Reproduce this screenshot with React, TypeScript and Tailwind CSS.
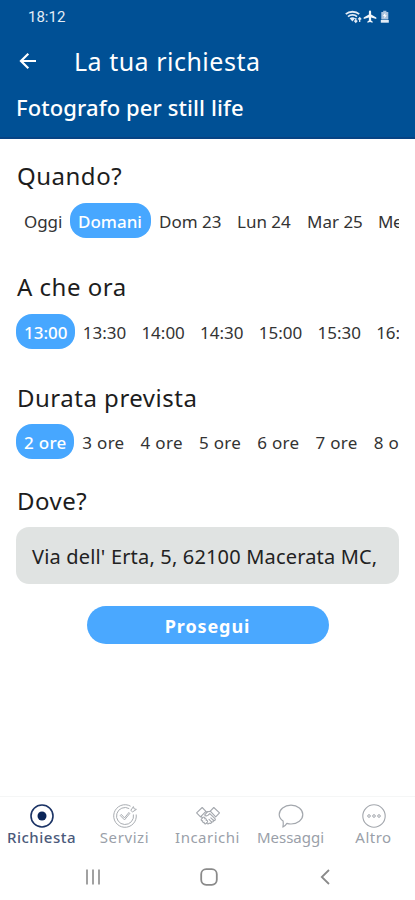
import { useState } from "react";
import type { ReactNode } from "react";
import { clsx } from "clsx";

// ── Data ──────────────────────────────────────────────────────────────────────

type Option = { label: string; width: string; tracking: string };

const DAYS: Option[] = [
  { label: "Oggi", width: "w-[54px]", tracking: "tracking-[-0.1px]" },
  { label: "Domani", width: "w-[81px]", tracking: "tracking-normal" },
  { label: "Dom 23", width: "w-[78px]", tracking: "tracking-normal" },
  { label: "Lun 24", width: "w-[70px]", tracking: "tracking-normal" },
  { label: "Mar 25", width: "w-[71px]", tracking: "tracking-normal" },
  { label: "Me", width: "w-[73px]", tracking: "tracking-[-0.5px]" },
];

const HOURS: Option[] = ["13:00", "13:30", "14:00", "14:30", "15:00", "15:30", "16:"].map(
  (label) => ({ label, width: "w-[58.7px]", tracking: "tracking-normal" }),
);

const DURATIONS: Option[] = ["2 ore", "3 ore", "4 ore", "5 ore", "6 ore", "7 ore", "8 o"].map(
  (label) => ({ label, width: "w-[58.3px]", tracking: "tracking-[0.3px]" }),
);

// ── Status bar icons ──────────────────────────────────────────────────────────

function StatusIcons() {
  return (
    <svg width="46" height="14" viewBox="0 0 46 14" fill="none" stroke="#e3ecf6">
      <path d="M.8 4.200C4.300.9 10.700.9 14.200 4.200M3 6.600C5.500 4.300 9.500 4.300 12 6.600" strokeWidth="1.800" />
      <path d="M4.600 8.300C6.200 6.900 8.700 6.900 10.200 8.300L7.400 11.400Z" fill="#e3ecf6" stroke="none" />
      <path d="M10.800 8v4M9.300 10.600l1.500 1.600 1.500-1.600M14.700 12V8M13.200 9.400l1.500-1.600 1.500 1.600" strokeWidth="1.300" />
      <path
        d="M31.300 8.900V7.500L26.100 4.500V1.700a1.100 1.100 0 0 0-2.200 0V4.500L18.700 7.500V8.900L23.900 7.400V10.400L22.400 11.600V12.700L25 12 27.600 12.700V11.600L26.100 10.400V7.400Z"
        fill="#f0f5fa"
        stroke="none"
      />
      <path d="M38.200.8h3.200V2h1.900v7.600h-7V2h1.900Z" fill="#a9c3df" stroke="none" />
      <path d="M40.300 2.700 37.900 6h1.500v2.600L41.700 5.300h-1.400Z" fill="#fff" stroke="none" />
      <path d="M35.800 10h8v2.700h-8Z" fill="#e3ecf6" stroke="none" />
    </svg>
  );
}

// ── Tab icons ─────────────────────────────────────────────────────────────────

function RequestIcon() {
  return (
    <svg width="26" height="26" viewBox="0 0 26 26" fill="none">
      <circle cx="13" cy="13" r="11" stroke="#1b3365" strokeWidth="1.600" />
      <circle cx="13" cy="13" r="4.500" fill="#0b2558" />
    </svg>
  );
}

function ServicesIcon() {
  return (
    <svg width="26" height="26" viewBox="0 0 26 26" fill="none" stroke="#a9adb2" strokeWidth="1">
      <path d="M18.600 3.200A11.300 11.300 0 1 0 24.200 11.500" />
      <path d="M17.200 5.600A8.500 8.500 0 1 0 21.400 11.500" />
      <path d="m9.300 11.400 3.200 3.500 4.700-5.800M9.300 11.400l-1 1.200 4.200 4.300 5.600-6.800" />
      <path d="m18.800 7.400 2.600-3.800.7 2.200 2.300.6-3.800 2.500Z" />
    </svg>
  );
}

function HandshakeIcon() {
  return (
    <svg width="26" height="26" viewBox="0 0 26 26" fill="none" stroke="#a3a7ad" strokeWidth="1.100" strokeLinejoin="round" strokeLinecap="round">
      <path d="m7.200 4.500 3.700 3.800-5.400 5.500-3.900-3.900Z" />
      <path d="m18.800 4.500-3.500 3.700 5.400 5.600 3.800-3.900Z" />
      <path d="M10.500 8.700h2.200l-3 3.200c.8 1.400 2.600 1.200 3.600.1l1.500-1.300 5.200 5c1 1.200-.5 2.500-1.700 1.500" />
      <path d="m12.500 8.700 3-.3M6 13.300l1.200 1.200M18.300 17.200l-2.500-2.400M16.500 18.800l-2.500-2.400M18.300 17.200c.6 1.200-.7 2.300-1.800 1.600.3 1.300-1.200 2-2.200 1.300-.5 1-1.700 1-2.600.2" />
      <path d="m6.400 16.200 1.700-1.800c1.200-.9 2.400.3 1.600 1.400 1.200-.6 2.200.6 1.400 1.600 1.100-.4 2 .7 1.300 1.700l-1.700 1.600c-1 .5-1.900-.4-1.500-1.400-1.100.5-2-.5-1.500-1.500-1.100.4-2-.7-1.300-1.600Z" />
    </svg>
  );
}

function BubbleIcon() {
  return (
    <svg width="26" height="26" viewBox="0 0 26 26" fill="none" stroke="#a3a7ad" strokeWidth="1.200" strokeLinejoin="round">
      <path d="M13 2.200c6.600 0 11.800 4.200 11.800 9.400S19.600 21 13 21c-1.500 0-2.800-.2-4.100-.6-1.100 1.700-2.500 2.800-4 3.700.5-1.900.5-3.900.2-6C2.600 16.400 1.200 14.200 1.200 11.600 1.200 6.400 6.400 2.200 13 2.200Z" />
    </svg>
  );
}

function MoreIcon() {
  return (
    <svg width="26" height="26" viewBox="0 0 26 26" fill="none" stroke="#a3a7ad">
      <circle cx="13" cy="13" r="11.200" strokeWidth="1.100" />
      <circle cx="8" cy="13" r="1.300" />
      <circle cx="13" cy="13" r="1.300" />
      <circle cx="18" cy="13" r="1.300" />
    </svg>
  );
}

// ── Building blocks ───────────────────────────────────────────────────────────

function OptionRow({ options, initial }: { options: Option[]; initial: string }) {
  const [selected, setSelected] = useState(initial);
  return (
    <div className="flex h-[35px] overflow-hidden">
      {options.map((o) => (
        <button
          key={o.label}
          onClick={() => setSelected(o.label)}
          className={clsx(
            "h-[35px] shrink-0 whitespace-nowrap rounded-[16px] pt-0.5 pl-2 text-left text-[17px]",
            o.width,
            o.tracking,
            o.label === selected ? "bg-[#47a7ff] font-medium text-white" : "text-[#333]",
          )}
        >
          {o.label}
        </button>
      ))}
    </div>
  );
}

function SectionTitle({ children, className }: { children: ReactNode; className?: string }) {
  return (
    <h2 className={clsx("h-8 whitespace-nowrap pl-px text-[24px] leading-[34px] tracking-[0.5px] text-[#1d1d1d]", className)}>
      {children}
    </h2>
  );
}

function Tab({ icon, label, active, className }: { icon: ReactNode; label: string; active?: boolean; className: string }) {
  return (
    <button className={clsx("flex w-[83px] flex-col items-center", active ? "font-medium text-[#4b5a7b]" : "text-[#9a9fa9]")}>
      {icon}
      <span className={clsx("mt-[-3px] whitespace-nowrap text-[15px] leading-[22px]", className)}>{label}</span>
    </button>
  );
}

// ── App ───────────────────────────────────────────────────────────────────────

export default function App() {
  return (
    <div className="flex h-[900px] w-[415px] flex-col overflow-hidden bg-white font-['Noto_Sans',sans-serif]">
      <header className="h-[139px] shrink-0 border-b-2 border-[#074384] bg-[#005095] text-white">
        <div className="flex h-[34px] items-center justify-between pl-7 pr-[24px]">
          <span className="pt-px font-[Roboto,sans-serif] text-[15px] text-[#e3ecf6]">18:12</span>
          <StatusIcons />
        </div>
        <div className="flex h-[54px] items-center pl-[19px]">
          <svg width="18" height="18" viewBox="0 0 18 18" fill="none" stroke="#fff" strokeWidth="2.200">
            <path d="M17 9H2.500M9.300 1.800 2 9l7.300 7.200" />
          </svg>
          <h1 className="ml-[37px] whitespace-nowrap pt-0.5 text-[25px] tracking-[0.5px]">La tua richiesta</h1>
        </div>
        <p className="pl-4 text-[22px] font-medium leading-[38px] tracking-[0.1px]">Fotografo per still life</p>
      </header>

      <main className="flex grow flex-col px-4">
        <SectionTitle className="mt-5 mb-3">Quando?</SectionTitle>
        <OptionRow options={DAYS} initial="Domani" />

        <SectionTitle className="mt-8 mb-3">A che ora</SectionTitle>
        <OptionRow options={HOURS} initial="13:00" />

        <SectionTitle className="mt-8 mb-[11px]">Durata prevista</SectionTitle>
        <OptionRow options={DURATIONS} initial="2 ore" />

        <SectionTitle className="mt-[25px]">Dove?</SectionTitle>
        <div className="mt-[11px] flex h-[57px] items-center overflow-hidden whitespace-nowrap rounded-[13px] bg-[#e0e3e2] px-4 pt-0.5 text-[20px] tracking-[0.17px] text-[#222]">
          Via dell' Erta, 5, 62100 Macerata MC,
        </div>

        <button className="mx-auto mt-[22px] h-[38px] w-[242px] rounded-full bg-[#4aa8ff] pt-0.5 text-[18px] font-bold tracking-[0.9px] text-white">
          Prosegui
        </button>
      </main>

      <nav className="flex h-[58px] shrink-0 border-t border-[#f5f6f6] pt-1.5">
        <Tab icon={<RequestIcon />} label="Richiesta" active className="tracking-[0.5px]" />
        <Tab icon={<ServicesIcon />} label="Servizi" className="tracking-[0.6px]" />
        <Tab icon={<HandshakeIcon />} label="Incarichi" className="tracking-[0.5px]" />
        <Tab icon={<BubbleIcon />} label="Messaggi" className="tracking-normal" />
        <Tab icon={<MoreIcon />} label="Altro" className="tracking-[0.5px]" />
      </nav>

      <footer className="flex h-[46px] shrink-0 items-center pl-[85px]">
        <svg width="16" height="16" viewBox="0 0 16 16" stroke="#8a8a8a" strokeWidth="1.600">
          <path d="M2 .5v15M8 .5v15M14 .5v15" />
        </svg>
        <svg className="ml-[99px]" width="18" height="18" viewBox="0 0 18 18" fill="none" stroke="#8a8a8a" strokeWidth="1.800">
          <rect x="1.200" y="1.200" width="15.600" height="15.600" rx="5" />
        </svg>
        <svg className="ml-[102px]" width="10" height="16" viewBox="0 0 10 16" fill="none" stroke="#8a8a8a" strokeWidth="1.800">
          <path d="M9 1 1.800 8 9 15" />
        </svg>
      </footer>
    </div>
  );
}
